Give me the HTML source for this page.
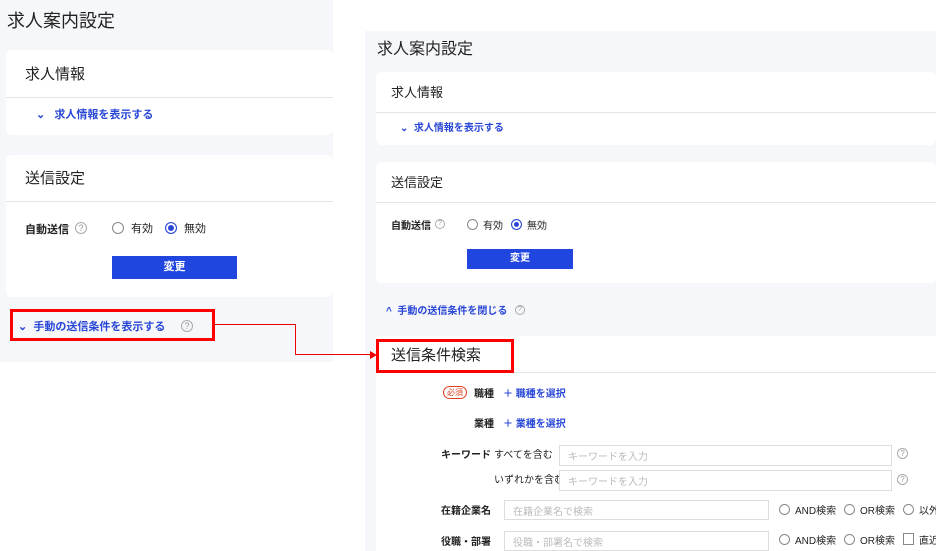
<!DOCTYPE html>
<html><head><meta charset="utf-8"><style>
*{box-sizing:border-box;margin:0;padding:0}
body{width:936px;height:551px;background:#fff;position:relative;overflow:hidden;font-family:"Liberation Sans","Noto Sans CJK JP",sans-serif;color:#222}
.a{position:absolute;white-space:nowrap}
.bg{background:#f6f7fa}
.card{background:#fff;border-radius:6px}
.hr{height:1px;background:#e3e5ec}
.lnk{color:#2947d6;font-weight:bold}
.q{border:1px solid #aaa;border-radius:50%;color:#999;text-align:center}
.rad{border:1px solid #888;border-radius:50%;background:#fff}
.inp{border:1px solid #ddd;background:#fff;color:#bbb;font-size:10px;padding-left:8px;display:flex;align-items:center}
.red{border:3px solid #f00}
</style></head><body>
<!-- left -->
<div class="a bg" style="left:0;top:0;width:333px;height:362px"></div>
<div class="a" style="left:7px;top:7px;font-size:18px">求人案内設定</div>
<div class="a card" style="left:6px;top:50px;width:327px;height:85px"></div>
<div class="a" style="left:25px;top:63px;font-size:15px">求人情報</div>
<div class="a hr" style="left:6px;top:97px;width:327px"></div>
<div class="a lnk" style="left:36px;top:106px;font-size:11px">⌄&nbsp;&nbsp;&nbsp;求人情報を表示する</div>
<div class="a card" style="left:6px;top:155px;width:327px;height:142px"></div>
<div class="a" style="left:25px;top:167px;font-size:15px">送信設定</div>
<div class="a hr" style="left:6px;top:201px;width:327px"></div>
<div class="a" style="left:25px;top:221px;font-size:11px;font-weight:bold">自動送信</div>
<div class="a q" style="left:75px;top:222px;width:12px;height:12px;font-size:9px;line-height:10px">?</div>
<div class="a rad" style="left:112px;top:222px;width:12px;height:12px"></div>
<div class="a" style="left:131px;top:220px;font-size:11px">有効</div>
<div class="a rad" style="left:165px;top:222px;width:12px;height:12px;border-color:#2947d6;box-shadow:inset 0 0 0 2px #fff;background:#2947d6"></div>
<div class="a" style="left:184px;top:220px;font-size:11px">無効</div>
<div class="a" style="left:112px;top:256px;width:125px;height:23px;background:#2146e0;color:#fff;font-size:11px;font-weight:bold;text-align:center;line-height:23px">変更</div>
<div class="a red" style="left:10px;top:309px;width:205px;height:32px"></div>
<div class="a lnk" style="left:18px;top:318px;font-size:11px">⌄&nbsp;&nbsp;手動の送信条件を表示する</div>
<div class="a q" style="left:181px;top:320px;width:12px;height:12px;font-size:9px;line-height:10px">?</div>
<!-- right -->
<div class="a bg" style="left:365px;top:31px;width:571px;height:520px"></div>
<div class="a" style="left:377px;top:35px;font-size:16px">求人案内設定</div>
<div class="a card" style="left:376px;top:72px;width:560px;height:73px"></div>
<div class="a" style="left:391px;top:82px;font-size:13px">求人情報</div>
<div class="a hr" style="left:376px;top:112px;width:560px"></div>
<div class="a lnk" style="left:400px;top:119px;font-size:10px">⌄&nbsp;&nbsp;求人情報を表示する</div>
<div class="a card" style="left:376px;top:162px;width:560px;height:121px"></div>
<div class="a" style="left:391px;top:172px;font-size:13px">送信設定</div>
<div class="a hr" style="left:376px;top:202px;width:560px"></div>
<div class="a" style="left:391px;top:217px;font-size:10px;font-weight:bold">自動送信</div>
<div class="a q" style="left:435px;top:219px;width:10px;height:10px;font-size:7px;line-height:8px">?</div>
<div class="a rad" style="left:467px;top:219px;width:11px;height:11px"></div>
<div class="a" style="left:483px;top:217px;font-size:10px">有効</div>
<div class="a rad" style="left:511px;top:219px;width:11px;height:11px;border-color:#2947d6;box-shadow:inset 0 0 0 2px #fff;background:#2947d6"></div>
<div class="a" style="left:527px;top:217px;font-size:10px">無効</div>
<div class="a" style="left:467px;top:249px;width:106px;height:20px;background:#2146e0;color:#fff;font-size:10px;font-weight:bold;text-align:center;line-height:20px">変更</div>
<div class="a lnk" style="left:386px;top:302px;font-size:10px">^&nbsp;&nbsp;手動の送信条件を閉じる</div>
<div class="a q" style="left:515px;top:305px;width:10px;height:10px;font-size:7px;line-height:8px">?</div>
<div class="a" style="left:376px;top:336px;width:560px;height:215px;background:#fff"></div>
<div class="a hr" style="left:376px;top:372px;width:560px"></div>
<div class="a red" style="left:376px;top:339px;width:138px;height:34px"></div>
<div class="a" style="left:391px;top:344px;font-size:15px">送信条件検索</div>
<div class="a" style="left:443px;top:386px;font-size:8px;color:#e04020;border:1px solid #e04020;border-radius:8px;padding:0 3px;line-height:11px">必須</div>
<div class="a" style="left:474px;top:385px;font-size:10px;font-weight:bold">職種</div>
<div class="a lnk" style="left:503px;top:385px;font-size:10px">＋&nbsp;職種を選択</div>
<div class="a" style="left:474px;top:415px;font-size:10px;font-weight:bold">業種</div>
<div class="a lnk" style="left:503px;top:415px;font-size:10px">＋&nbsp;業種を選択</div>
<div class="a" style="left:441px;top:446px;font-size:10px;font-weight:bold">キーワード</div>
<div class="a" style="left:494px;top:446px;font-size:10px">すべてを含む</div>
<div class="a" style="left:494px;top:471px;font-size:10px">いずれかを含む</div>
<div class="a inp" style="left:559px;top:445px;width:333px;height:21px">キーワードを入力</div>
<div class="a inp" style="left:559px;top:470px;width:333px;height:21px">キーワードを入力</div>
<div class="a q" style="left:897px;top:448px;width:11px;height:11px;font-size:8px;line-height:9px">?</div>
<div class="a q" style="left:897px;top:474px;width:11px;height:11px;font-size:8px;line-height:9px">?</div>
<div class="a" style="left:441px;top:502px;font-size:10px;font-weight:bold">在籍企業名</div>
<div class="a inp" style="left:504px;top:500px;width:265px;height:20px">在籍企業名で検索</div>
<div class="a" style="left:441px;top:533px;font-size:10px;font-weight:bold">役職・部署</div>
<div class="a inp" style="left:504px;top:531px;width:265px;height:20px">役職・部署名で検索</div>
<div class="a rad" style="left:779px;top:504px;width:11px;height:11px"></div>
<div class="a" style="left:795px;top:502px;font-size:10px">AND検索</div>
<div class="a rad" style="left:844px;top:504px;width:11px;height:11px"></div>
<div class="a" style="left:860px;top:502px;font-size:10px">OR検索</div>
<div class="a rad" style="left:903px;top:504px;width:11px;height:11px"></div>
<div class="a" style="left:919px;top:502px;font-size:10px">以外</div>
<div class="a rad" style="left:779px;top:534px;width:11px;height:11px"></div>
<div class="a" style="left:795px;top:532px;font-size:10px">AND検索</div>
<div class="a rad" style="left:844px;top:534px;width:11px;height:11px"></div>
<div class="a" style="left:860px;top:532px;font-size:10px">OR検索</div>
<div class="a" style="left:903px;top:533px;width:11px;height:12px;border:1px solid #888"></div>
<div class="a" style="left:919px;top:532px;font-size:10px">直近</div>
<!-- connector -->
<div class="a" style="left:214px;top:324px;width:82px;height:1px;background:#e00"></div>
<div class="a" style="left:295px;top:324px;width:1px;height:31px;background:#e00"></div>
<div class="a" style="left:295px;top:354px;width:76px;height:1px;background:#e00"></div>
<div class="a" style="left:370px;top:351px;width:0;height:0;border-left:7px solid #e00;border-top:4px solid transparent;border-bottom:4px solid transparent"></div>
</body></html>
